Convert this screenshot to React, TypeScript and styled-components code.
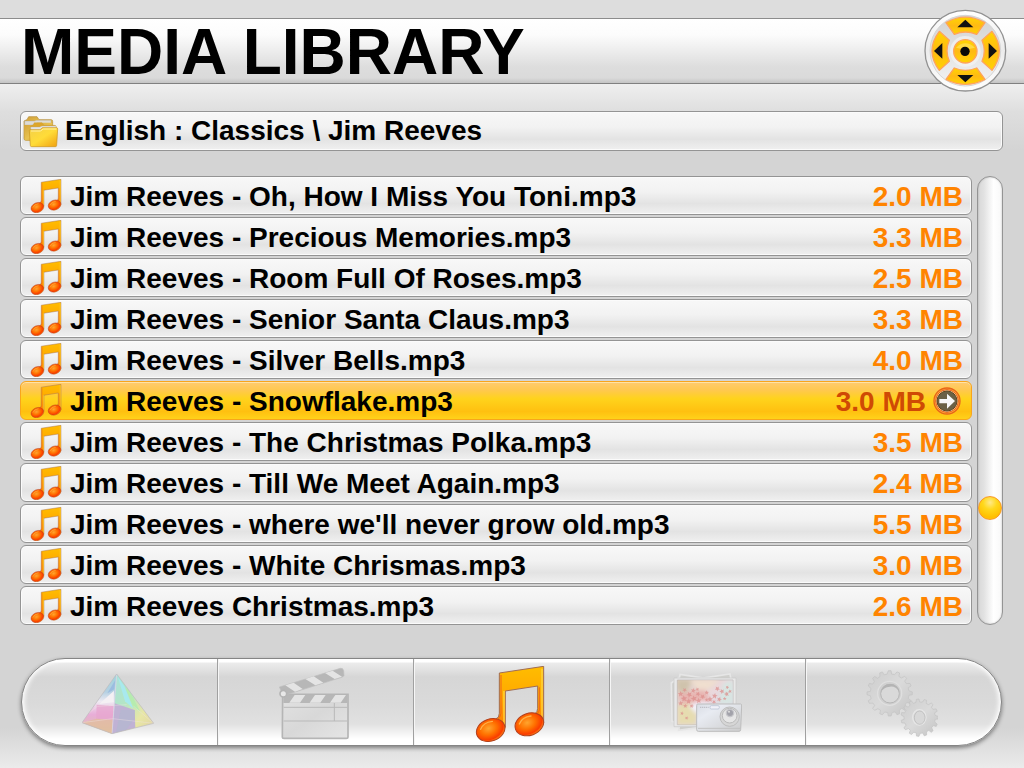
import React, { useState } from "react";
import styled, { createGlobalStyle } from "styled-components";

const Global = createGlobalStyle`
  * { box-sizing: border-box; }
  body { margin: 0; font-family: "Liberation Sans", Arial, sans-serif; font-weight: 700; color: #000; background: #d4d4d4; }
  button { font: inherit; color: inherit; border: 0; background: none; padding: 0; cursor: pointer; }
  ul { list-style: none; margin: 0; padding: 0; }
  svg { display: block; flex: none; }
`;

const Page = styled.div`
  min-height: 100vh;
  display: flex;
  flex-direction: column;
  padding-top: 18px;
  background:
    linear-gradient(#dddddd, #dddddd) top / 100% 18px no-repeat,
    linear-gradient(#d4d4d400, #ebebeb) bottom / 100% 40px no-repeat,
    linear-gradient(#efefef 84px, #dedede 112px, #d4d4d4 150px);
`;

const Header = styled.header`
  height: 66px;
  display: flex;
  align-items: center;
  justify-content: space-between;
  padding: 0 17px 2px 21px;
  border-top: 1px solid #8c8c8c;
  border-bottom: 1px solid #808080;
  background: linear-gradient(#ffffff 0%, #fcfcfc 25%, #dddddd 75%, #dadada 92%, #c4c4c4 100%);
`;

const Title = styled.h1`
  margin: 0;
  padding-top: 4px;
  font-size: 64px;
  line-height: 64px;
  white-space: nowrap;
`;

const Pad = styled.div`
  position: relative;
  flex: none;
  width: 83px;
  height: 83px;
`;

const PadKey = styled.button<{ $x: number; $y: number }>`
  position: absolute;
  left: ${(p) => p.$x}px;
  top: ${(p) => p.$y}px;
  width: 24px;
  height: 24px;
  border-radius: 12px;
`;

const Main = styled.main`
  flex: 1;
  display: flex;
  flex-direction: column;
  padding: 27px 21px 22px 20px;
`;

const panel = `
  border: 1px solid #949494;
  border-radius: 6px;
  background: linear-gradient(#f8f8f8 0%, #f2f2f2 40%, #e3e3e3 72%, #f0f0f0 100%);
  box-shadow: inset 0 0 0 1px #fbfbfb;
`;

const PathBar = styled.nav`
  ${panel}
  height: 40px;
  display: flex;
  align-items: center;
  gap: 6px;
  padding-left: 2px;
  margin-bottom: 25px;
  font-size: 28px;
  line-height: 32px;
  white-space: nowrap;
`;

const Browser = styled.section`
  display: flex;
  gap: 5px;
`;

const List = styled.ul`
  flex: 1;
  min-width: 0;
  display: flex;
  flex-direction: column;
  gap: 2px;
`;

const Row = styled.button<{ $active: boolean }>`
  ${panel}
  width: 100%;
  height: 39px;
  display: flex;
  align-items: center;
  padding: 0 8px 0 9px;
  font-size: 28px;
  line-height: 32px;
  text-align: left;
  white-space: nowrap;
  ${(p) =>
    p.$active &&
    `
    border-color: #f9a51b;
    background: linear-gradient(#ffcb70 0%, #ffc84f 22%, #ffd31c 45%, #ffc010 80%, #ffd21a 100%);
    box-shadow: inset 0 1px 0 #ffe2a6;
  `}
`;

const FileName = styled.span`
  flex: 1;
  min-width: 0;
  overflow: hidden;
  padding: 2px 0 0 8px;
`;

const Size = styled.span<{ $active: boolean }>`
  padding-top: 2px;
  color: ${(p) => (p.$active ? "#cf4a05" : "#ff8400")};
`;

const OpenMark = styled.span`
  margin: 0 2px 0 7px;
`;

const Scroll = styled.input`
  appearance: none;
  writing-mode: vertical-lr;
  flex: none;
  width: 26px;
  height: auto;
  margin: 0;
  border: 1px solid #949494;
  border-radius: 13px;
  background: linear-gradient(90deg, #d8d8d8 0%, #e2e2e2 25%, #ffffff 65%, #f8f8f8 100%);
  box-shadow: inset 0 0 2px #00000040;
  &::-webkit-slider-thumb {
    appearance: none;
    width: 24px;
    height: 24px;
    border: 1px solid #f9982a;
    border-radius: 12px;
    background: radial-gradient(circle at 50% 25%, #ffe98a 0%, #ffd81c 35%, #ffbf00 75%, #ffd01a 100%);
  }
`;

const Tabs = styled.nav`
  height: 88px;
  display: flex;
  margin: 33px 1px 0 1px;
  border: 1px solid #858585;
  border-radius: 44px;
  overflow: hidden;
  background: linear-gradient(#ffffff 0 3px, #ececec 4px, #d6d6d6 18px, #dadada 45px, #e1e1e1 65px, #ffffff 80px);
  box-shadow: 0 2px 4px #00000070, inset 2px 0 5px #ffffff, inset -2px 0 5px #ffffff;
`;

const Tab = styled.button`
  flex: 1;
  display: flex;
  align-items: center;
  justify-content: center;
  padding: 4px 4px 0 0;
  & + & {
    border-left: 1px solid #a0a0a0;
    box-shadow: inset 1px 0 0 #f6f6f6;
  }
`;

function NoteIcon({ id, width, height }: { id: string; width: number; height: number }) {
  return (
    <svg width={width} height={height} viewBox="102 48 216 228" aria-hidden="true">
      <defs>
        <linearGradient id={id + "s"} x1="0" x2="0" y1="0" y2="1">
          <stop offset="0" stopColor="#ffbd00" />
          <stop offset=".5" stopColor="#ffa800" />
          <stop offset="1" stopColor="#ff7a00" />
        </linearGradient>
        <radialGradient id={id + "h"} cx=".45" cy=".4" r=".62">
          <stop offset="0" stopColor="#ffa52e" />
          <stop offset=".45" stopColor="#ff7200" />
          <stop offset=".82" stopColor="#fa3c00" />
          <stop offset="1" stopColor="#ff9a1c" />
        </radialGradient>
      </defs>
      <path
        d="M178 69 311 49V218Q306 240 284 192Q293 186 293 175V108L196 123V232Q190 246 167 207Q178 204 178 190Z"
        fill={`url(#${id}s)`}
        stroke="#a06c54"
        strokeWidth="3"
        strokeLinejoin="round"
      />
      <path d="M183 75V190Q181 204 172 208M298 112V180Q297 190 288 192" fill="none" stroke="#f0641a" strokeWidth="3" />
      <path d="M192 123V225M306 56V215" fill="none" stroke="#ffd640" strokeWidth="4" />
      <g fill={`url(#${id}h)`} stroke="#b2401c" strokeWidth="3">
        <ellipse cx="152" cy="240" rx="44" ry="33" transform="rotate(-20 152 240)" />
        <ellipse cx="268" cy="223" rx="44" ry="33" transform="rotate(-20 268 223)" />
      </g>
      <path d="M122 238Q130 217 157 214M238 222Q246 201 273 198" fill="none" stroke="#ffb04a" strokeWidth="4" strokeLinecap="round" />
    </svg>
  );
}

function FolderIcon() {
  return (
    <svg width="36" height="34" viewBox="0 0 108 102" aria-hidden="true">
      <defs>
        <linearGradient id="fb" x1="0" x2="1" y1="0" y2="1">
          <stop offset="0" stopColor="#d0a03a" />
          <stop offset=".5" stopColor="#e8c250" />
          <stop offset="1" stopColor="#c08a16" />
        </linearGradient>
        <linearGradient id="ff" x1="0" x2="1" y1="0" y2="1">
          <stop offset="0" stopColor="#f3d04a" />
          <stop offset=".5" stopColor="#ffdc38" />
          <stop offset="1" stopColor="#f0a010" />
        </linearGradient>
      </defs>
      <path d="M3 21 12 17 17 8H42L48 17H85Q89 17 89 23V79H8Q3 79 3 73Z" fill="url(#fb)" stroke="#b48a35" strokeWidth="2" />
      <path d="M5 33V21H34L40 19H84V33Z" fill="#dedcd6" stroke="#a8a49a" />
      <path d="M3 33H32L42 26H88V79H7Z" fill="url(#fb)" />
      <path d="M22 38 30 33 34 26H57L63 34H95Q100 34 100 39V57H22Z" fill="#dda62a" stroke="#c49531" />
      <path d="M23 52V39H50L57 36H99V52Z" fill="#e6e5e1" stroke="#aaa89f" />
      <path d="M19 50Q19 47 22 47H49Q54 47 58 41H101Q104 41 104 45L101 94Q101 98 97 98H26Q22 98 22 94Z" fill="url(#ff)" stroke="#c9921c" strokeWidth="2" />
      <path d="M24 51H52L61 45H100" fill="none" stroke="#fff0a4" strokeWidth="3" />
    </svg>
  );
}

function ArrowIcon() {
  return (
    <svg width="28" height="28" viewBox="0 0 84 84" aria-hidden="true">
      <circle cx="42" cy="42" r="39" fill="#ffb733" stroke="#e8641b" strokeWidth="4" />
      <circle cx="42" cy="42" r="34" fill="#ffe7a8" stroke="#e9531e" strokeWidth="3" />
      <circle cx="42" cy="42" r="30" fill="#6b6146" stroke="#5a4420" strokeWidth="3" />
      <path d="M19 36H42V20L66 42 42 65V49H19Z" fill="#f7f7f7" />
    </svg>
  );
}

function PadArt() {
  return (
    <svg width="83" height="83" viewBox="42 25 249 249" aria-hidden="true">
      <defs>
        <linearGradient id="pr" x1="0" x2="0" y1="0" y2="1">
          <stop offset="0" stopColor="#ffffff" />
          <stop offset=".5" stopColor="#ececec" />
          <stop offset="1" stopColor="#ffffff" />
        </linearGradient>
        <linearGradient id="pi" x1="0" x2="0" y1="0" y2="1">
          <stop offset="0" stopColor="#d2d2d2" />
          <stop offset="1" stopColor="#f3f3f3" />
        </linearGradient>
        <linearGradient id="pk" x1="0" x2="0" y1="0" y2="1">
          <stop offset="0" stopColor="#ffd500" />
          <stop offset=".5" stopColor="#ffb915" />
          <stop offset="1" stopColor="#ffd400" />
        </linearGradient>
      </defs>
      <circle cx="166" cy="150" r="121" fill="url(#pr)" stroke="#929292" strokeWidth="4" />
      <circle cx="166" cy="150" r="106" fill="url(#pi)" stroke="#d5d5d5" strokeWidth="3" />
      <g fill="url(#pk)" stroke="#ffa45a" strokeWidth="4" strokeLinejoin="round">
        <path d="M108 66Q166 33 225 66L200 101Q166 87 133 101Z" />
        <path d="M108 236Q166 266 225 236L200 202Q166 216 133 202Z" />
        <path d="M88 92Q44 150 88 209L118 182Q104 150 118 119Z" />
        <path d="M246 92Q290 150 246 209L216 182Q230 150 216 119Z" />
      </g>
      <circle cx="166" cy="152" r="46" fill="#f4f4f4" opacity=".7" />
      <circle cx="166" cy="152" r="35" fill="url(#pk)" stroke="#ffa45a" strokeWidth="4" />
      <path d="M138 141Q166 115 195 141Q166 148 138 141Z" fill="#ffe25a" opacity=".7" />
      <circle cx="165" cy="152" r="14" fill="#080808" />
      <path d="M142 80 166 57 190 80ZM142 223 166 245 190 223ZM97 127 72 151 97 174ZM236 127 261 151 236 174Z" fill="#111111" />
    </svg>
  );
}

function PrismIcon() {
  return (
    <svg width="72" height="76" viewBox="216 288 216 228" aria-hidden="true">
      <defs>
        <linearGradient id="pl" x1="0" x2="0" y1="0" y2="1">
          <stop offset="0" stopColor="#9fd4dc" />
          <stop offset=".3" stopColor="#b5d0e2" />
          <stop offset=".46" stopColor="#eeeaf2" />
          <stop offset=".68" stopColor="#e8add8" />
          <stop offset="1" stopColor="#dcc5a5" />
        </linearGradient>
        <linearGradient id="pg" x1="0" x2="1" y1="0" y2="1">
          <stop offset="0" stopColor="#a9e1dd" />
          <stop offset=".4" stopColor="#b4e5c5" />
          <stop offset=".7" stopColor="#e8e7a6" />
          <stop offset="1" stopColor="#dfd0a3" />
        </linearGradient>
      </defs>
      <path d="M320 312 216 458 306 491Z" fill="url(#pl)" />
      <path d="M320 312 431 460 306 491Z" fill="url(#pg)" />
      <path d="M316 330 292 370 313 358Z" fill="#9bbce0" />
      <path d="M312 362 268 402 311 396Z" fill="#f4f0f4" />
      <path d="M260 404 311 408 308 449 258 446Z" fill="#e7a6cf" opacity=".8" />
      <path d="M314 400 374 420 376 473 306 491Z" fill="#c0b2d4" />
      <path d="M332 420H374V445L348 480 318 487Z" fill="#b4b6cf" opacity=".8" />
      <path d="M216 458 260 446 252 472ZM258 446 308 449 306 491 252 472Z" fill="#e1bd9c" opacity=".75" />
      <path d="M324 322 345 394 370 416 344 350Z" fill="#a8e9ee" />
      <path d="M345 350 370 412 390 424 360 366Z" fill="#b6ecae" />
      <path d="M216 458 308 446 431 460M236 430 262 409 350 404M370 408 431 460" fill="none" stroke="#f0e4e2" strokeWidth="2" opacity=".6" />
      <path d="M320 312 306 491" stroke="#e0d5ea" strokeWidth="2" />
      <path d="M320 312 216 458 306 491 431 460Z" fill="none" stroke="#bdb9bc" strokeWidth="2" />
    </svg>
  );
}

function ClapperIcon() {
  return (
    <svg width="72" height="76" viewBox="174 48 216 228" aria-hidden="true">
      <defs>
        <linearGradient id="cb" x1="0" x2="1" y1="0" y2="1">
          <stop offset="0" stopColor="#e2e2e2" />
          <stop offset=".5" stopColor="#d8d8d8" />
          <stop offset="1" stopColor="#e5e5e5" />
        </linearGradient>
      </defs>
      <path d="M188 133H384V260Q384 265 379 265H192Q187 265 187 260Z" fill="url(#cb)" stroke="#b5b5b5" strokeWidth="5" />
      <path d="M190 134H382V159H190Z" fill="#b7b7b7" />
      <path d="M224 135H256L240 158H208ZM285 135H317L301 158H269ZM346 135H378L362 158H330Z" fill="#e4e4e4" />
      <path d="M191 172H381M191 213H381M343 159V213" stroke="#b9b9b9" strokeWidth="3" />
      <path d="M178 111 361 55Q369 53 371 62L372 76Q371 80 365 82L190 137Z" fill="#b7b7b7" stroke="#c0c0c0" strokeWidth="2" />
      <path d="M196 106 221 98 248 117 225 125ZM256 87 281 79 310 98 286 106ZM315 69 338 62 366 80 344 87Z" fill="#e4e4e4" />
      <circle cx="190" cy="131" r="10" fill="#e8e8e8" stroke="#b4b4b4" strokeWidth="5" />
    </svg>
  );
}

const LEAVES = [
  [212, 132, 9], [224, 120, 7], [222, 146, 10], [238, 134, 9], [236, 154, 9], [250, 122, 8], [252, 146, 10],
  [264, 132, 8], [266, 152, 9], [278, 140, 8], [212, 160, 8], [226, 168, 7], [245, 168, 7], [262, 118, 6],
  [290, 128, 7], [300, 148, 9], [314, 138, 9], [312, 156, 7], [328, 148, 8], [322, 116, 8], [336, 124, 8],
  [350, 132, 8], [344, 146, 6], [360, 124, 6], [352, 112, 6], [290, 150, 6], [216, 190, 6], [230, 204, 6],
];

function leafPath([x, y, r]: number[]) {
  const points: string[] = [];
  for (let i = 0; i < 10; i++) {
    const a = (i / 10) * Math.PI * 2 + x;
    const d = i % 2 ? r * 0.45 : r;
    points.push(`${(x + Math.cos(a) * d).toFixed(1)} ${(y + Math.sin(a) * d).toFixed(1)}`);
  }
  return `M${points.join("L")}Z`;
}

function PhotosIcon() {
  return (
    <svg width="72" height="76" viewBox="180 48 216 228" aria-hidden="true">
      <defs>
        <linearGradient id="ph" x1="0" x2="1" y1="0" y2="1">
          <stop offset="0" stopColor="#dccdbe" />
          <stop offset=".45" stopColor="#ead8dc" />
          <stop offset="1" stopColor="#d2d4ea" />
        </linearGradient>
        <linearGradient id="cam" x1="0" x2="1" y1="0" y2="1">
          <stop offset="0" stopColor="#d9dce4" />
          <stop offset=".3" stopColor="#e8ebf2" />
          <stop offset="1" stopColor="#cccccc" />
        </linearGradient>
        <filter id="soft"><feGaussianBlur stdDeviation="6" /></filter>
        <clipPath id="pc"><path d="M202 90H369V224H202Z" /></clipPath>
      </defs>
      <g fill="#cfcfcc" stroke="#e6e6e6" strokeWidth="5">
        <path d="M210 73 370 98 350 240 186 213Z" />
        <path d="M184 99 205 84 225 236 186 213Z" />
        <path d="M230 92 360 72 386 215 206 241Z" />
      </g>
      <path d="M192 84H378V230H192Z" fill="#e8e8e8" stroke="#c9c9c9" strokeWidth="2" />
      <path d="M202 90H369V224H202Z" fill="url(#ph)" stroke="#b9b3b3" strokeWidth="2" />
      <g clipPath="url(#pc)">
        <g filter="url(#soft)">
          <path d="M202 90H245L228 132 202 120Z" fill="#cfc3ac" />
          <path d="M202 168 235 155 262 178 258 224H202Z" fill="#e6dcb0" />
          <path d="M238 168 270 155 300 162 258 190Z" fill="#f3f2ff" />
          <path d="M240 90H330L292 120 262 116Z" fill="#f0dfcf" />
          <path d="M340 100 370 90V163H325Z" fill="#d7e6e2" />
          <path d="M205 130 285 120 300 150 215 165Z" fill="#e8b4b0" />
        </g>
        <path d={LEAVES.map(leafPath).join("")} fill="#dc8f8c" opacity=".75" />
      </g>
      <path d="M263 162H392Q396 162 395 168L392 239Q392 244 387 244H265Q260 244 260 239V166Q260 162 263 162Z" fill="url(#cam)" stroke="#bdbdbd" strokeWidth="3" />
      <path d="M264 235H390" stroke="#c2c2c2" strokeWidth="3" />
      <rect x="300" y="167" width="28" height="10" rx="4" fill="#f0f0f8" stroke="#b4bccf" strokeWidth="2" />
      <path d="M270 172H296" stroke="#c0c0c8" strokeWidth="4" strokeDasharray="4 2" />
      <circle cx="359" cy="200" r="29" fill="#d6d6d6" stroke="#bebebe" strokeWidth="3" />
      <circle cx="359" cy="197" r="22" fill="#e6e6e6" stroke="#bbbbbb" strokeWidth="3" />
      <circle cx="360" cy="189" r="11" fill="#a2a2aa" stroke="#c6c6ca" strokeWidth="4" />
      <circle cx="357" cy="185" r="3" fill="#dddddd" />
    </svg>
  );
}

function gearPath(cx: number, cy: number, outer: number, inner: number, teeth: number) {
  const points: string[] = [];
  const step = (Math.PI * 2) / teeth;
  for (let i = 0; i < teeth; i++) {
    [[-0.34, inner], [-0.16, outer], [0.16, outer], [0.26, inner]].forEach(([o, r]) => {
      const a = (i + o) * step;
      points.push(`${(cx + Math.cos(a) * r).toFixed(1)} ${(cy + Math.sin(a) * r).toFixed(1)}`);
    });
  }
  return `M${points.join("L")}Z`;
}

function GearsIcon() {
  return (
    <svg width="72" height="76" viewBox="168 198 216 228" aria-hidden="true">
      <defs>
        <linearGradient id="gr" x1="0" x2="1" y1="0" y2="1">
          <stop offset="0" stopColor="#cccccc" />
          <stop offset=".5" stopColor="#dadada" />
          <stop offset="1" stopColor="#c4c4c4" />
        </linearGradient>
      </defs>
      <g fill="url(#gr)" stroke="#c2c2c2" strokeWidth="2" strokeLinejoin="round">
        <path d={gearPath(239, 280, 68, 58, 16)} />
        <path d={gearPath(329, 353, 56, 47, 15)} />
      </g>
      <circle cx="239" cy="280" r="36" fill="#d0d0d0" stroke="#dfdfdf" strokeWidth="4" />
      <circle cx="240" cy="281" r="28" fill="#d9d9d9" stroke="#b6b6b6" strokeWidth="3" />
      <path d="M213 278Q215 252 241 252Q266 253 268 276Q257 258 240 260Q219 261 213 278Z" fill="#b4b4b4" />
      <ellipse cx="328" cy="352" rx="20" ry="23" fill="#d8d8d8" stroke="#e6e6e6" strokeWidth="4" />
      <ellipse cx="329" cy="353" rx="16" ry="20" fill="none" stroke="#b6b6b6" strokeWidth="2" />
    </svg>
  );
}

const FILES = [
  ["Jim Reeves - Oh, How I Miss You Toni.mp3", "2.0 MB"],
  ["Jim Reeves - Precious Memories.mp3", "3.3 MB"],
  ["Jim Reeves - Room Full Of Roses.mp3", "2.5 MB"],
  ["Jim Reeves - Senior Santa Claus.mp3", "3.3 MB"],
  ["Jim Reeves - Silver Bells.mp3", "4.0 MB"],
  ["Jim Reeves - Snowflake.mp3", "3.0 MB"],
  ["Jim Reeves - The Christmas Polka.mp3", "3.5 MB"],
  ["Jim Reeves - Till We Meet Again.mp3", "2.4 MB"],
  ["Jim Reeves - where we'll never grow old.mp3", "5.5 MB"],
  ["Jim Reeves - White Chrismas.mp3", "3.0 MB"],
  ["Jim Reeves Christmas.mp3", "2.6 MB"],
];

export default function App() {
  const [selected, setSelected] = useState(5);
  const move = (by: number) => setSelected((s) => Math.max(0, Math.min(FILES.length - 1, s + by)));

  return (
    <Page>
      <Global />
      <Header>
        <Title>MEDIA LIBRARY</Title>
        <Pad role="group" aria-label="Navigation pad">
          <PadArt />
          <PadKey $x={30} $y={3} aria-label="Up" onClick={() => move(-1)} />
          <PadKey $x={3} $y={30} aria-label="Left" />
          <PadKey $x={30} $y={30} aria-label="Select" />
          <PadKey $x={57} $y={30} aria-label="Right" />
          <PadKey $x={30} $y={57} aria-label="Down" onClick={() => move(1)} />
        </Pad>
      </Header>
      <Main>
        <PathBar aria-label="Current folder">
          <FolderIcon />
          <span>English : Classics \ Jim Reeves</span>
        </PathBar>
        <Browser>
          <List>
            {FILES.map(([name, size], i) => (
              <li key={name}>
                <Row $active={i === selected} onClick={() => setSelected(i)}>
                  <NoteIcon id={`n${i}`} width={32} height={34} />
                  <FileName>{name}</FileName>
                  <Size $active={i === selected}>{size}</Size>
                  {i === selected && (
                    <OpenMark>
                      <ArrowIcon />
                    </OpenMark>
                  )}
                </Row>
              </li>
            ))}
          </List>
          <Scroll type="range" min={0} max={200} defaultValue={151} aria-label="Scroll position" />
        </Browser>
        <Tabs aria-label="Sections">
          <Tab aria-label="Visualizations"><PrismIcon /></Tab>
          <Tab aria-label="Videos"><ClapperIcon /></Tab>
          <Tab aria-label="Music" aria-current="page"><NoteIcon id="big" width={72} height={76} /></Tab>
          <Tab aria-label="Pictures"><PhotosIcon /></Tab>
          <Tab aria-label="Settings"><GearsIcon /></Tab>
        </Tabs>
      </Main>
    </Page>
  );
}
